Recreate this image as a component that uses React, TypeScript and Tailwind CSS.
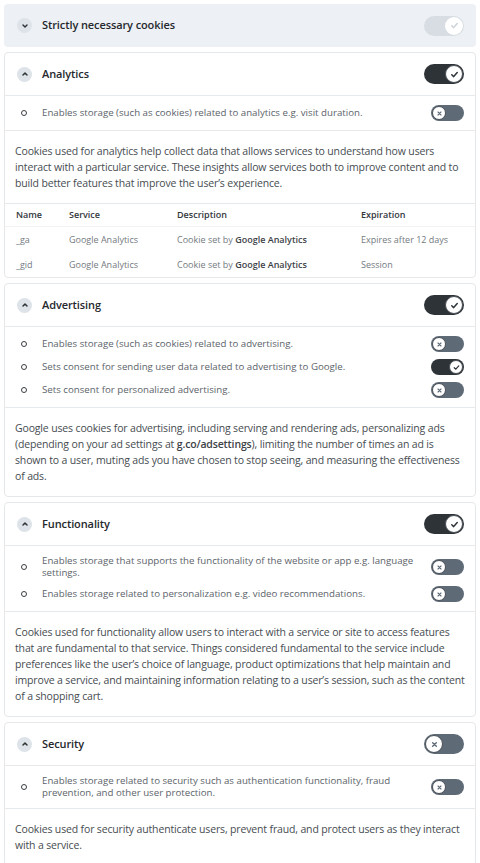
import React from 'react';

const FONT = "font-['Open_Sans','Liberation_Sans',sans-serif]";

const Check = ({ className }: { className?: string }) => (
  <svg viewBox="0 0 12 12" className={className} fill="none" stroke="currentColor" strokeWidth={1.6} strokeLinecap="round" strokeLinejoin="round">
    <path d="M3 6.3 5.1 8.3 9 3.9" />
  </svg>
);

const Cross = ({ className }: { className?: string }) => (
  <svg viewBox="0 0 12 12" className={className} fill="none" stroke="currentColor" strokeWidth={1.5} strokeLinecap="round">
    <path d="M4 4l4 4M8 4l-4 4" />
  </svg>
);

type ToggleProps = { on: boolean; size?: 'lg' | 'sm'; disabled?: boolean };

const Toggle = ({ on, size = 'sm', disabled }: ToggleProps) => {
  const lg = size === 'lg';
  const track = disabled ? 'bg-[#d7dde2]' : on ? 'bg-[#2e3338]' : 'bg-[#5e6a76]';
  return (
    <div
      className={`${lg ? 'w-[40px] h-[20px]' : 'w-[33px] h-[16px]'} ${track} rounded-full flex items-center shrink-0 p-[1px] ${on ? 'justify-end' : 'justify-start'}`}
    >
      <div
        className={`${lg ? 'w-[18px] h-[18px]' : 'w-[14px] h-[14px]'} rounded-full bg-white flex items-center justify-center ${disabled ? '' : 'border border-[#4a5057]'}`}
      >
        {on ? (
          <Check className={`${lg ? 'w-[11px] h-[11px]' : 'w-[9px] h-[9px]'} ${disabled ? 'text-[#cdd3d8]' : 'text-[#2e3338]'}`} />
        ) : (
          <Cross className={`${lg ? 'w-[11px] h-[11px]' : 'w-[9px] h-[9px]'} text-[#5e6a76]`} />
        )}
      </div>
    </div>
  );
};

const Chevron = ({ up }: { up?: boolean }) => (
  <div className="w-[15px] h-[15px] rounded-full bg-[#dde3e8] flex items-center justify-center shrink-0">
    <svg viewBox="0 0 10 10" className="w-[8px] h-[8px] text-[#2e3338]" fill="none" stroke="currentColor" strokeWidth={1.8} strokeLinecap="round" strokeLinejoin="round">
      <path d={up ? 'M2.5 6.3 5 3.8 7.5 6.3' : 'M2.5 3.8 5 6.3 7.5 3.8'} />
    </svg>
  </div>
);

const Title = ({ children }: { children: React.ReactNode }) => (
  <span className="text-[11px] tracking-[-0.1px] font-semibold text-[#25292d]">{children}</span>
);

const Header = ({ title, on, up = true }: { title: string; on: boolean; up?: boolean }) => (
  <div className="h-[42px] flex items-center pl-[12px] pr-[11px] gap-[10px]">
    <Chevron up={up} />
    <Title>{title}</Title>
    <div className="ml-auto">
      <Toggle on={on} size="lg" />
    </div>
  </div>
);

const Options = ({ items }: { items: { text: string; on: boolean }[] }) => (
  <div className="border-t border-[#e7eaed] pt-[9px] pb-[9px] flex flex-col gap-[7px]">
    {items.map((it, i) => (
      <div key={i} className="flex items-center pl-[16px] pr-[11px]">
        <div className="w-[6px] h-[6px] rounded-full border-[1.5px] border-[#3a3f44] shrink-0" />
        <p className="ml-[15px] flex-1 text-[9.7px] leading-[12px] text-[#5c636a] pr-[12px]">{it.text}</p>
        <Toggle on={it.on} />
      </div>
    ))}
  </div>
);

const Para = ({ children }: { children: React.ReactNode }) => (
  <div className="border-t border-[#e7eaed] px-[10px] py-[12px]">
    <p className="text-[10.5px] tracking-[-0.15px] leading-[16px] text-[#464c51]">{children}</p>
  </div>
);

const Card = ({ children }: { children: React.ReactNode }) => (
  <div className="border border-[#e4e8eb] rounded-[4px] bg-white">{children}</div>
);

const rows = [
  { name: '_ga', exp: 'Expires after 12 days' },
  { name: '_gid', exp: 'Session' },
];

export default function App() {
  return (
    <div className={`${FONT} bg-white min-h-screen px-[4px] pt-[4px] pb-[4px] flex flex-col gap-[5px]`}>
      <div className="rounded-[4px] bg-[#edf0f4] h-[43px] flex items-center pl-[13px] pr-[12px] gap-[10px]">
        <Chevron />
        <Title>Strictly necessary cookies</Title>
        <div className="ml-auto">
          <Toggle on size="lg" disabled />
        </div>
      </div>

      <Card>
        <Header title="Analytics" on />
        <Options items={[{ text: 'Enables storage (such as cookies) related to analytics e.g. visit duration.', on: false }]} />
        <Para>
          Cookies used for analytics help collect data that allows services to understand how users interact with a particular service. These insights allow services both to improve content and to build better features that improve the user’s experience.
        </Para>
        <div className="border-t border-[#e7eaed] text-[9px]">
          <div className="grid grid-cols-[53px_108px_184px_1fr] h-[23px] items-center pl-[11px] text-[#33383d] font-semibold border-b border-[#f0f2f4]">
            <span>Name</span>
            <span>Service</span>
            <span>Description</span>
            <span>Expiration</span>
          </div>
          {rows.map((r) => (
            <div key={r.name} className="grid grid-cols-[53px_108px_184px_1fr] h-[25px] items-center pl-[11px] text-[#737a80]">
              <span>{r.name}</span>
              <span>Google Analytics</span>
              <span>
                Cookie set by <b className="font-semibold text-[#3d4247]">Google Analytics</b>
              </span>
              <span>{r.exp}</span>
            </div>
          ))}
        </div>
      </Card>

      <Card>
        <Header title="Advertising" on />
        <Options
          items={[
            { text: 'Enables storage (such as cookies) related to advertising.', on: false },
            { text: 'Sets consent for sending user data related to advertising to Google.', on: true },
            { text: 'Sets consent for personalized advertising.', on: false },
          ]}
        />
        <Para>
          Google uses cookies for advertising, including serving and rendering ads, personalizing ads (depending on your ad settings at{' '}
          <b className="font-semibold text-[#3d4247]">g.co/adsettings</b>), limiting the number of times an ad is shown to a user, muting ads you have chosen to stop seeing, and measuring the effectiveness of ads.
        </Para>
      </Card>

      <Card>
        <Header title="Functionality" on />
        <Options
          items={[
            { text: 'Enables storage that supports the functionality of the website or app e.g. language settings.', on: false },
            { text: 'Enables storage related to personalization e.g. video recommendations.', on: false },
          ]}
        />
        <Para>
          Cookies used for functionality allow users to interact with a service or site to access features that are fundamental to that service. Things considered fundamental to the service include preferences like the user’s choice of language, product optimizations that help maintain and improve a service, and maintaining information relating to a user’s session, such as the content of a shopping cart.
        </Para>
      </Card>

      <Card>
        <Header title="Security" on={false} />
        <Options
          items={[
            { text: 'Enables storage related to security such as authentication functionality, fraud prevention, and other user protection.', on: false },
          ]}
        />
        <Para>
          Cookies used for security authenticate users, prevent fraud, and protect users as they interact with a service.
        </Para>
      </Card>
    </div>
  );
}
